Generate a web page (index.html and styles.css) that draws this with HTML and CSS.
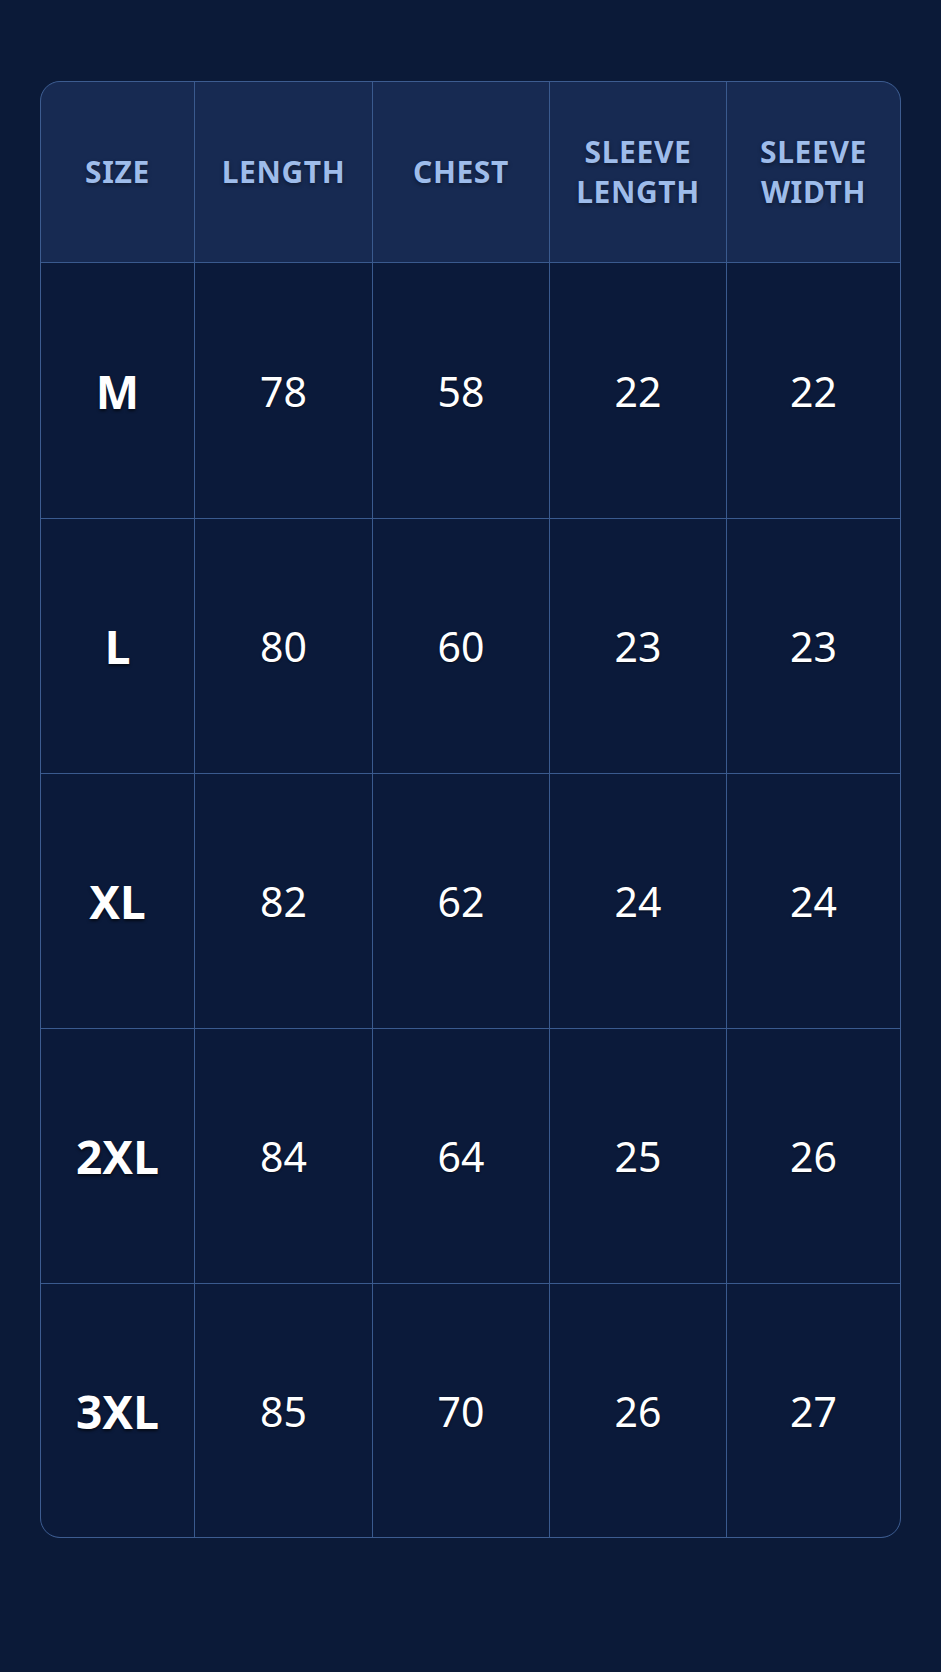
FILE: index.html
```html
<!DOCTYPE html>
<html>
<head>
<meta charset="utf-8">
<link rel="stylesheet" href="styles.css">
</head>
<body>
<div class="table">
  <div class="th">SIZE</div>
  <div class="th">LENGTH</div>
  <div class="th">CHEST</div>
  <div class="th">SLEEVE<br>LENGTH</div>
  <div class="th">SLEEVE<br>WIDTH</div>

  <div class="td size">M</div><div class="td">78</div><div class="td">58</div><div class="td">22</div><div class="td">22</div>
  <div class="td size">L</div><div class="td">80</div><div class="td">60</div><div class="td">23</div><div class="td">23</div>
  <div class="td size">XL</div><div class="td">82</div><div class="td">62</div><div class="td">24</div><div class="td">24</div>
  <div class="td size">2XL</div><div class="td">84</div><div class="td">64</div><div class="td">25</div><div class="td">26</div>
  <div class="td size">3XL</div><div class="td">85</div><div class="td">70</div><div class="td">26</div><div class="td">27</div>
</div>
</body>
</html>
```
FILE: styles.css
```css
html, body {
  margin: 0;
  padding: 0;
  background: #0b1a38;
}
body {
  width: 941px;
  height: 1672px;
  padding-top: 81px;
  box-sizing: border-box;
  font-family: "Noto Sans", "Open Sans", sans-serif;
}
.table {
  margin-left: 40px;
  width: 861px;
  box-sizing: border-box;
  border: 1px solid #3d5c90;
  border-radius: 20px;
  overflow: hidden;
  display: grid;
  grid-template-columns: 153px 177px 176px 176px 173px;
  grid-template-rows: 180px 255px 254px 254px 254px 253px;
  gap: 1px;
  background: #3a5a8e;
}
.th {
  background: #172a52;
  color: #9ebcea;
  font-weight: 700;
  font-size: 30px;
  line-height: 40px;
  letter-spacing: 0.6px;
  text-align: center;
  display: flex;
  align-items: center;
  justify-content: center;
  text-shadow: 0 2px 4px rgba(0, 0, 0, 0.4);
}
.td {
  background: #0b1a3a;
  color: #ffffff;
  font-size: 41px;
  font-weight: 400;
  display: flex;
  align-items: center;
  justify-content: center;
  text-shadow: 0 1px 2px rgba(0, 0, 0, 0.5);
}
.td.size {
  font-weight: 700;
  font-size: 46px;
  text-shadow: 0 2px 3px rgba(0, 0, 0, 0.6);
}
```
